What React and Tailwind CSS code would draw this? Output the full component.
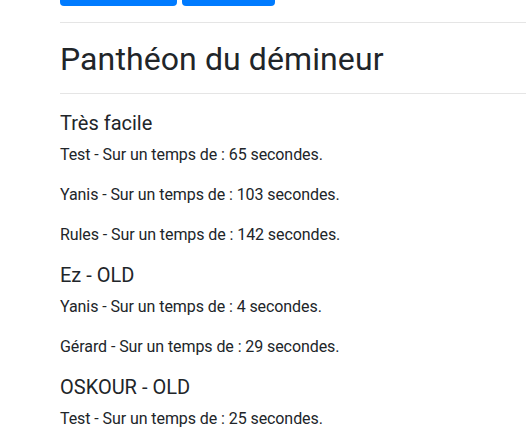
import React from "react";

const levels = [
  {
    name: "Très facile",
    scores: [
      { player: "Test", time: 65 },
      { player: "Yanis", time: 103 },
      { player: "Rules", time: 142 },
    ],
  },
  {
    name: "Ez - OLD",
    scores: [
      { player: "Yanis", time: 4 },
      { player: "Gérard", time: 29 },
    ],
  },
  {
    name: "OSKOUR - OLD",
    scores: [{ player: "Test", time: 25 }],
  },
];

export default function App() {
  return (
    <div
      className="min-h-[427px] overflow-hidden bg-white pl-[60px] text-[#212529]"
      style={{ fontFamily: "Roboto, 'Liberation Sans', sans-serif" }}
    >
      {/* Buttons, page is scrolled so they are cut off at the top */}
      <div className="-mt-[32px] flex gap-[5px]">
        <button className="h-[38px] w-[117px] rounded-[4px] bg-[#007bff] text-white"></button>
        <button className="h-[38px] w-[93px] rounded-[4px] bg-[#007bff] text-white"></button>
      </div>

      <hr className="mt-[16px] border-0 border-t border-[#e5e5e5]" />

      <h1 className="mt-[17px] text-[32px] leading-[1.2] font-normal tracking-[0.1px]">Panthéon du démineur</h1>

      <hr className="mt-[15px] mb-[17px] border-0 border-t border-[#e5e5e5]" />

      {levels.map((level) => (
        <div key={level.name}>
          <h5 className="mb-[8px] text-[20px] leading-[24px] font-normal">{level.name}</h5>
          {level.scores.map((s, i) => (
            <p key={i} className="mb-[16px] text-[16px] leading-[24px] tracking-[-0.08px]">
              {s.player} - Sur un temps de : {s.time} secondes.
            </p>
          ))}
        </div>
      ))}
    </div>
  );
}
